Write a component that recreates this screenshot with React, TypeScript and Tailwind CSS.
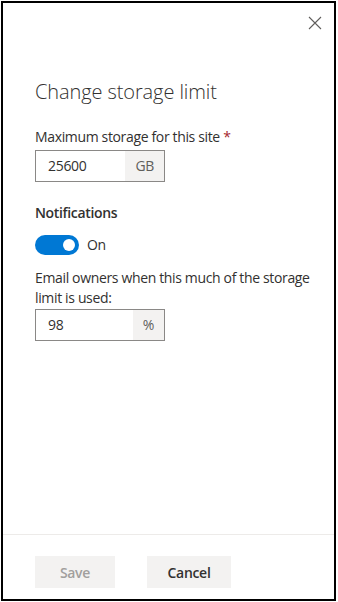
import { useState } from 'react';

interface SuffixFieldProps {
  value: string;
  suffix: string;
}

function SuffixField({ value, suffix }: SuffixFieldProps) {
  return (
    <div className="flex h-[32px] w-[130px] border border-[#8a8886] bg-white">
      <input
        className="min-w-0 flex-1 bg-transparent pl-[12px] text-[14px] tracking-[-0.3px] text-[#323130] outline-none"
        defaultValue={value}
      />
      <span className="flex items-center bg-[#f3f2f1] px-[10px] text-[14px] text-[#605e5c]">{suffix}</span>
    </div>
  );
}

export default function App() {
  const [notify, setNotify] = useState(true);

  return (
    <div
      className="ml-px mt-px flex h-[600px] w-[335px] flex-col border-2 border-black bg-white text-[#323130]"
      style={{ fontFamily: '"Open Sans", "Noto Sans", sans-serif' }}
    >
      {/* Header with close button */}
      <div className="flex justify-end pr-[9px] pt-[10px]">
        <button className="flex h-[20px] w-[20px] items-center justify-center text-[#605e5c]" aria-label="Close">
          <svg width="14" height="14" viewBox="0 0 14 14" fill="none" stroke="currentColor" strokeWidth="1.1">
            <path d="M1 1L13 13M13 1L1 13" />
          </svg>
        </button>
      </div>

      <div className="flex flex-1 flex-col pl-[32px] pr-[20px] text-[14px] leading-[20px] tracking-[-0.35px]">
        <h1 className="mt-[45px] text-[20px] font-light leading-[28px] tracking-[-0.1px] text-[#323130]">
          Change storage limit
        </h1>

        <label className="mt-[21px]">
          Maximum storage for this site <span className="text-[#a4262c]">*</span>
        </label>
        <div className="mt-[3px]">
          <SuffixField value="25600" suffix="GB" />
        </div>

        <div className="mt-[21px] font-semibold">Notifications</div>

        <div className="mt-[12px] flex items-center gap-[8px]">
          <button
            onClick={() => setNotify(!notify)}
            className={
              notify
                ? 'flex h-[20px] w-[44px] items-center justify-end rounded-full bg-[#0078d4] px-[4px]'
                : 'flex h-[20px] w-[44px] items-center justify-start rounded-full border border-[#323130] bg-white px-[4px]'
            }
          >
            <span className={notify ? 'h-[12px] w-[12px] rounded-full bg-white' : 'h-[12px] w-[12px] rounded-full bg-[#323130]'} />
          </button>
          <span>{notify ? 'On' : 'Off'}</span>
        </div>

        <p className="mt-[13px]">Email owners when this much of the storage limit is used:</p>
        <div className="mt-[1px]">
          <SuffixField value="98" suffix="%" />
        </div>
      </div>

      {/* Footer */}
      <div className="flex gap-[32px] border-t border-[#edebe9] pb-[11px] pl-[32px] pt-[21px] text-[14px] font-semibold tracking-[-0.3px]">
        <button className="h-[32px] w-[80px] bg-[#f3f2f1] text-[#a19f9d]" disabled>
          Save
        </button>
        <button className="h-[32px] w-[84px] bg-[#f3f2f1] text-[#323130]">Cancel</button>
      </div>
    </div>
  );
}
